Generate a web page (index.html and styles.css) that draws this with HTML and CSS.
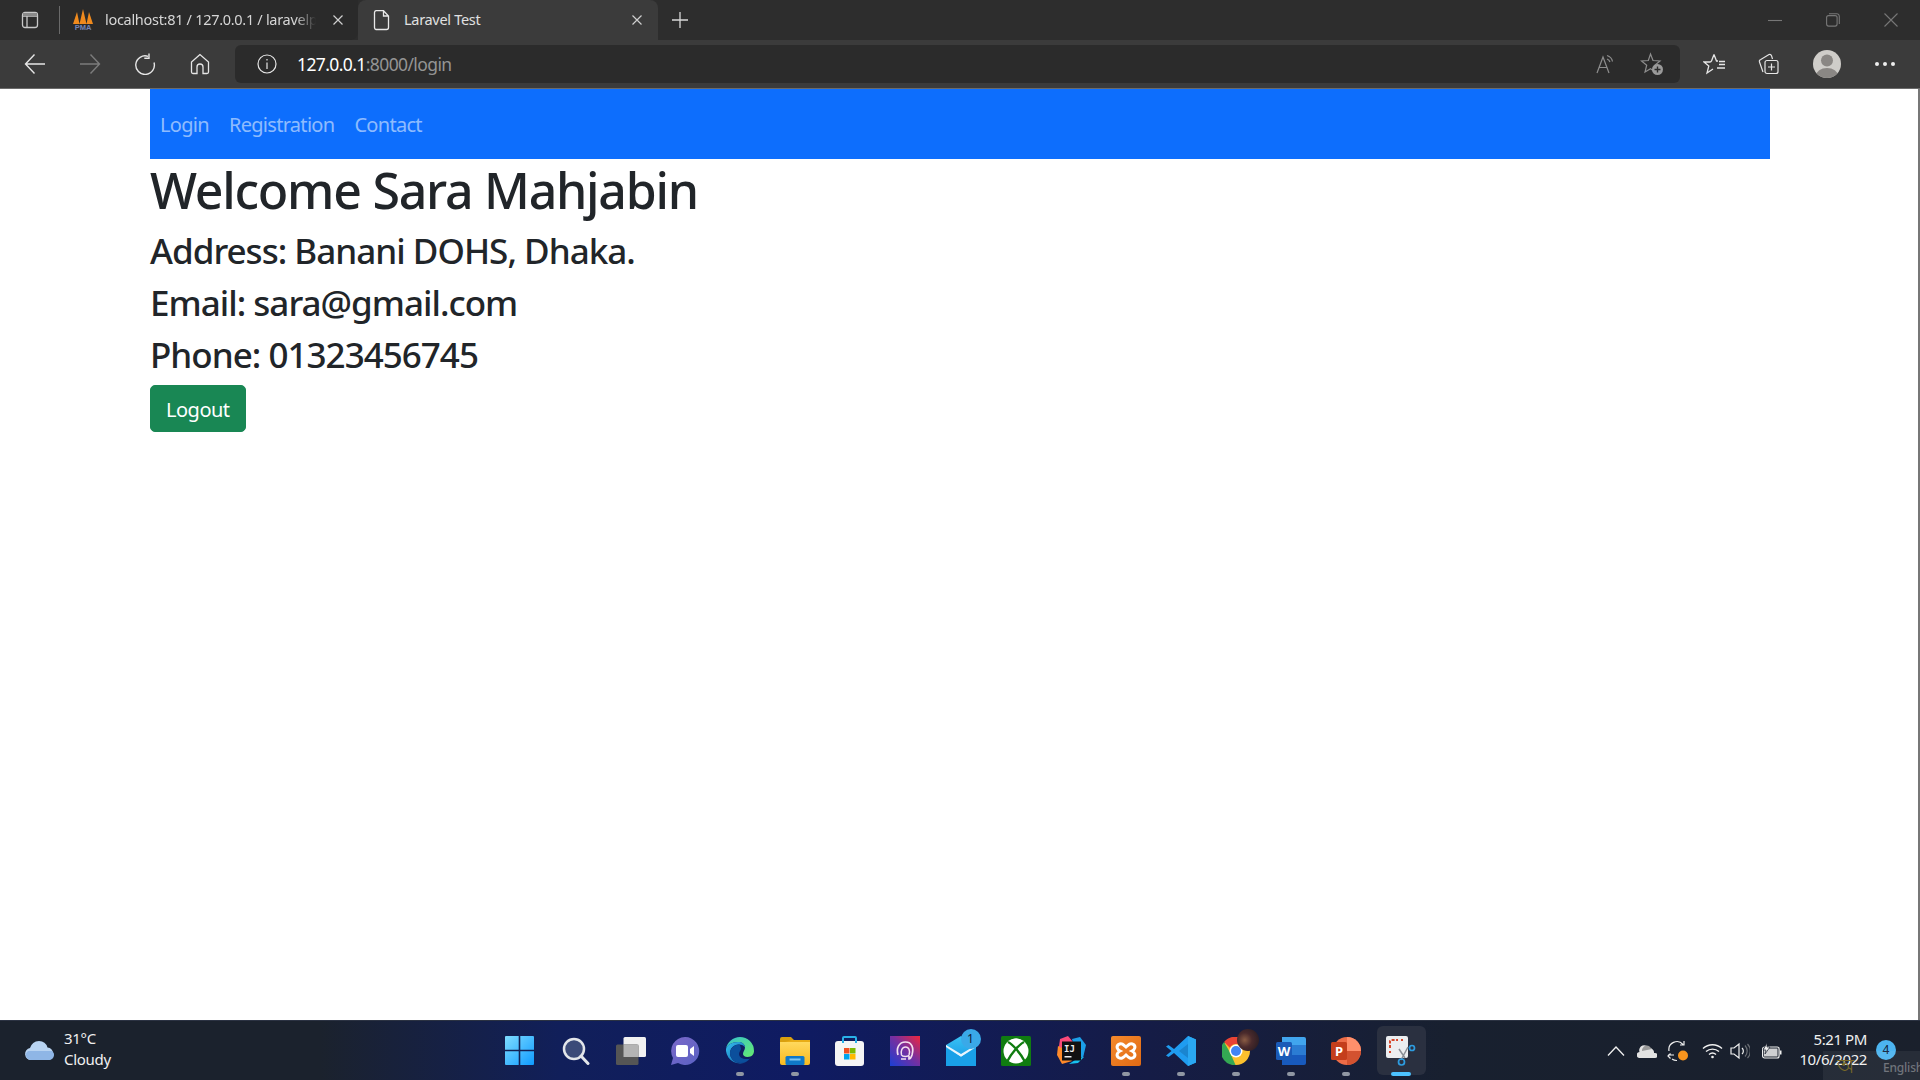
FILE: index.html
```html
<!DOCTYPE html>
<html lang="en">
<head>
  <meta charset="UTF-8" />
  <title>Laravel Test</title>
  <link rel="stylesheet" href="styles.css">
</head>
<body>
  <svg class="defs" width="0" height="0">
    <defs>
      <linearGradient id="gWin" x1="0" y1="0" x2="1" y2="1"><stop offset="0" stop-color="#7fdcff"/><stop offset="1" stop-color="#0f9bff"/></linearGradient>
      <linearGradient id="gChat" x1="0" y1="0" x2="1" y2="1"><stop offset="0" stop-color="#7b68c8"/><stop offset="1" stop-color="#5a62c4"/></linearGradient>
      <linearGradient id="gEdge" x1="0" y1="0" x2="1" y2="1"><stop offset="0" stop-color="#35c1f1"/><stop offset="1" stop-color="#0c59a4"/></linearGradient>
      <linearGradient id="gEdge2" x1="0" y1="0" x2="1" y2="1"><stop offset="0" stop-color="#35c1d0"/><stop offset="1" stop-color="#66eb6e"/></linearGradient>
      <linearGradient id="gFolder" x1="0" y1="0" x2="0" y2="1"><stop offset="0" stop-color="#ffd95e"/><stop offset="1" stop-color="#f9b91f"/></linearGradient>
      <linearGradient id="gAvast" x1="0" y1="1" x2="1" y2="0"><stop offset="0" stop-color="#1a3fd4"/><stop offset=".55" stop-color="#7a2f9e"/><stop offset="1" stop-color="#f0263c"/></linearGradient>
      <linearGradient id="gMail" x1="0" y1="0" x2="0" y2="1"><stop offset="0" stop-color="#3ac3f5"/><stop offset="1" stop-color="#0f8fe0"/></linearGradient>
      <linearGradient id="gXampp" x1="0" y1="0" x2="1" y2="1"><stop offset="0" stop-color="#f58a2c"/><stop offset="1" stop-color="#e06a14"/></linearGradient>
    </defs>
  </svg>

  <div class="tabstrip">
    <div class="sidebar-btn">
      <svg width="20" height="20" viewBox="0 0 20 20" fill="none" stroke="#c8c8c8" stroke-width="1.3"><rect x="2.5" y="2.5" width="15" height="15" rx="2.5"/><path d="M7 6.5V17M3 6h14" /><rect x="3" y="3" width="14" height="3" fill="#8a8a8a" stroke="none"/></svg>
    </div>
    <div class="tab">
      <svg class="favicon" width="22" height="22" viewBox="0 0 22 22">
        <path d="M1 15 5 3l2.500 12zM7.500 15 11 0l3.500 15zM14.500 15 17 3l4 12z" fill="#f08a1d"/>
        <text class="pma" x="11" y="21" text-anchor="middle">PMA</text>
      </svg>
      <span class="tab-title fade">localhost:81 / 127.0.0.1 / laravelp</span>
      <svg class="tab-close" width="12" height="12" viewBox="0 0 12 12" stroke="#cfcfcf" stroke-width="1.2"><path d="M1.500 1.500l9 9M10.500 1.500l-9 9"/></svg>
    </div>
    <div class="tab active">
      <svg class="favicon" width="18" height="22" viewBox="0 0 18 22" fill="none" stroke="#e8e8e8" stroke-width="1.3"><path d="M3 1.700h7.500L15.500 7v11.500a2 2 0 0 1-2 2H3a2 2 0 0 1-1.500-2V3.500A2 2 0 0 1 3 1.700zM10.500 1.700V7h5"/></svg>
      <span class="tab-title">Laravel Test</span>
      <svg class="tab-close" width="12" height="12" viewBox="0 0 12 12" stroke="#cfcfcf" stroke-width="1.2"><path d="M1.500 1.500l9 9M10.500 1.500l-9 9"/></svg>
    </div>
    <svg class="new-tab" width="18" height="18" viewBox="0 0 18 18" stroke="#d8d8d8" stroke-width="1.3"><path d="M9 1v16M1 9h16"/></svg>
    <div class="window-btns">
      <svg width="14" height="14" viewBox="0 0 14 14" stroke="#777" stroke-width="1.1"><path d="M0 7.500h14"/></svg>
      <svg width="14" height="14" viewBox="0 0 14 14" fill="none" stroke="#777" stroke-width="1.1"><rect x=".6" y="2.600" width="10.500" height="10.500" rx="2"/><path d="M3 .7h8a2.500 2.500 0 0 1 2.300 2.300v8"/></svg>
      <svg width="14" height="14" viewBox="0 0 14 14" stroke="#777" stroke-width="1.1"><path d="M.5.500l13 13M13.500.5l-13 13"/></svg>
    </div>
  </div>

  <div class="toolbar">
    <div class="tool">
      <svg width="22" height="22" viewBox="0 0 22 22" fill="none" stroke="#e6e6e6" stroke-width="1.4"><path d="M21 11H1.500M10.500 1.500 1.500 11l9 9.500"/></svg>
    </div>
    <div class="tool">
      <svg width="22" height="22" viewBox="0 0 22 22" fill="none" stroke="#7c7c7c" stroke-width="1.4"><path d="M1 11h19.500M11.500 1.500l9 9.500-9 9.500"/></svg>
    </div>
    <div class="tool">
      <svg width="22" height="22" viewBox="0 0 22 22" fill="none" stroke="#e6e6e6" stroke-width="1.4"><path d="M14 3.300A9.300 9.300 0 1 0 20 9.500M15 .5v4.700h-4.700" /></svg>
    </div>
    <div class="tool">
      <svg width="22" height="22" viewBox="0 0 22 22" fill="none" stroke="#e6e6e6" stroke-width="1.3"><path d="M11 1.500 2.500 9v10a1.500 1.500 0 0 0 1.500 1.500h4V14a3 3 0 0 1 6 0v6.500h4a1.500 1.500 0 0 0 1.500-1.500V9z"/></svg>
    </div>

    <div class="addressbar">
      <svg class="info" width="20" height="20" viewBox="0 0 20 20" fill="none" stroke="#e6e6e6" stroke-width="1.2"><circle cx="10" cy="10" r="9"/><path d="M10 8.500V15M10 5v1.500"/></svg>
      <span class="url"><b>127.0.0.1</b>:8000/login</span>
      <svg class="read" width="20" height="20" viewBox="0 0 20 20" fill="none" stroke="#8e8e8e" stroke-width="1.2"><path d="M1 19 7 3l6 16M3 13.500h8M11 1.500c3 1 5 3 5.500 6M11 5c1.500.5 2.500 1.500 3 3"/></svg>
      <svg class="fav-add" width="24" height="24" viewBox="0 0 24 24"><path d="M10.500 2 13 8.500l7 .5-5.500 4.500L16 20.500l-5.500-3.700L5 20l1.700-6.800L1.500 9l6.800-.5z" fill="none" stroke="#8e8e8e" stroke-width="1.2"/><circle cx="17.500" cy="17.500" r="5.500" fill="#9a9a9a"/><path d="M17.500 14.500v6M14.500 17.500h6" stroke="#2b2b2b" stroke-width="1.400"/></svg>
    </div>

    <div class="tools-right">
      <div class="tool">
        <svg width="24" height="22" viewBox="0 0 24 22" fill="none" stroke="#e6e6e6" stroke-width="1.3"><path d="M11 1.500 13.500 8H15M7.500 9 1 9l4.800 4L4 20l6-4M8.500 8 11 1.500M7.500 9l1-1M16 8.500h6M16 11.500h6M14 15h8"/></svg>
      </div>
      <div class="tool">
        <svg width="22" height="22" viewBox="0 0 22 22" fill="none" stroke="#e6e6e6" stroke-width="1.2"><path d="M6 19 2.500 9a2 2 0 0 1 1.300-2.500L12 1.500a2 2 0 0 1 2.500 1.200L15.500 6"/><rect x="8" y="7.500" width="13" height="13" rx="2" fill="#3b3b3b"/><path d="M14.500 10.500v7M11 14h7"/></svg>
      </div>
      <div class="avatar">
        <svg width="28" height="28" viewBox="0 0 28 28"><defs><clipPath id="avatarClip"><circle cx="14" cy="14" r="14"/></clipPath></defs><circle cx="14" cy="14" r="14" fill="#cfcdc9"/><g clip-path="url(#avatarClip)"><circle cx="14" cy="10.500" r="6" fill="#8a8784"/><ellipse cx="14" cy="26" rx="11" ry="8" fill="#8a8784"/></g></svg>
      </div>
      <div class="tool more"><i></i><i></i><i></i></div>
    </div>
  </div>

  <main class="page">
    <nav class="navbar">
      <a class="nav-link" href="#">Login</a>
      <a class="nav-link" href="#">Registration</a>
      <a class="nav-link" href="#">Contact</a>
    </nav>
    <h1>Welcome Sara Mahjabin</h1>
    <h3>Address: Banani DOHS, Dhaka.</h3>
    <h3>Email: sara@gmail.com</h3>
    <h3>Phone: 01323456745</h3>
    <a class="btn-logout" href="#">Logout</a>
  </main>

  <footer class="taskbar">
    <div class="weather">
      <svg width="32" height="24" viewBox="0 0 32 24"><path d="M7 21a6 6 0 0 1-1-11.900A10 10 0 0 1 15 2a9 9 0 0 1 8.500 6.500A6.500 6.500 0 0 1 25 21z" fill="#b9d4f2"/><path d="M7 21a5 5 0 0 1-3-9h24a5 5 0 0 1-3 9z" fill="#8fb6e6"/></svg>
      <div class="weather-text"><div>31°C</div><div>Cloudy</div></div>
    </div>

    <div class="apps">
      <div class="app"><svg width="29" height="29" viewBox="0 0 29 29" fill="url(#gWin)"><path d="M1 0h12.700v13.700H0V1a1 1 0 0 1 1-1zM15.300 0H28a1 1 0 0 1 1 1v12.700H15.300zM0 15.300h13.700V29H1a1 1 0 0 1-1-1zM15.300 15.300H29V28a1 1 0 0 1-1 1H15.300z"/></svg></div>
      <div class="app search"><svg width="28" height="28" viewBox="0 0 28 28"><circle cx="12" cy="12" r="10" fill="#3b4a78" stroke="#e3e6ea" stroke-width="2.500"/><path d="M19 19l7 7.500" stroke="#e3e6ea" stroke-width="3" stroke-linecap="round"/></svg></div>
      <div class="app search"><svg width="30" height="28" viewBox="0 0 30 28"><rect x="7.500" y="0" width="22.500" height="20" rx="1.500" fill="#f1f1f1"/><rect x="0" y="7.500" width="22.500" height="20.500" rx="1.500" fill="#555"/><rect x="7.500" y="7.500" width="15" height="12.500" fill="#b4b4b4"/></svg></div>
      <div class="app"><svg width="30" height="30" viewBox="0 0 30 30"><path d="M15 1a14 14 0 1 1-7 26L1 29l2-7A14 14 0 0 1 15 1z" fill="url(#gChat)"/><rect x="6" y="9" width="12" height="12" rx="2" fill="#fff"/><path d="M20 13l4-3v10l-4-3z" fill="#fff"/></svg></div>
      <div class="app on"><svg width="30" height="30" viewBox="0 0 30 30"><path d="M15 1a14 14 0 0 1 14 14c0 3-2 6-6.500 6-3 0-4.500-1.500-4.500-3 0-3 2-3.500 2-6.500C20 8 17 6 13 6 7 6 2 9 1 13 2 6 8 1 15 1z" fill="url(#gEdge2)"/><path d="M1 13c1-4 6-7 12-7 4 0 7 2 7 5.500-1-2-3-3-6-3-6 0-9 4.500-9 8.500 0 5 4 10 11 10 2 0 4-.5 6-1.500A14 14 0 0 1 1 15z" fill="url(#gEdge)"/><path d="M14 8.500c-5 0-9 4.500-9 8.500 0 5 4 10 11 10 4 0 7-2 9-4.500-1 .5-2 .5-3 .5-5 0-8-2-8-5 0-2 1.500-3 2-5-.5-2.500-1-4.500-2-4.500z" fill="#0b4f9c"/></svg></div>
      <div class="app on"><svg width="30" height="28" viewBox="0 0 30 28"><path d="M0 2a2 2 0 0 1 2-2h9l3 3h14a2 2 0 0 1 2 2v4H0z" fill="#d9a00f"/><path d="M0 5h30v21a2 2 0 0 1-2 2H2a2 2 0 0 1-2-2z" fill="url(#gFolder)"/><path d="M5 5h25V3H12z" fill="#e9ad16"/><rect x="5.500" y="19" width="19" height="9" rx="1.500" fill="#0f78c8"/><rect x="9.500" y="21.500" width="11" height="2" fill="#7fc6f2"/></svg></div>
      <div class="app"><svg width="30" height="30" viewBox="0 0 30 30"><rect x="0" y="5" width="29" height="25" rx="3" fill="#f5f5f5"/><path d="M8 7V2a1 1 0 0 1 1-1h11a1 1 0 0 1 1 1v5" fill="none" stroke="#29b1e8" stroke-width="2"/><rect x="9" y="12" width="5.500" height="5.500" fill="#f25022"/><rect x="15" y="12" width="5.500" height="5.500" fill="#7fba00"/><rect x="9" y="18" width="5.500" height="5.500" fill="#00a4ef"/><rect x="15" y="18" width="5.500" height="5.500" fill="#ffb900"/></svg></div>
      <div class="app"><svg width="30" height="30" viewBox="0 0 30 30"><rect width="30" height="30" fill="url(#gAvast)"/><path d="M8 19c-2-7 1-13 7.500-13S24 12 22 19c-1 3-2 4-3 4v-3" fill="none" stroke="#f3dfef" stroke-width="1.700"/><path d="M11.500 19c-1-4 .5-8 4-8s5 4 3.500 8c-.5 1-1.500 1.500-3.500 1.500S12 20 11.500 19zM11 23h5" fill="none" stroke="#f3dfef" stroke-width="1.500"/></svg></div>
      <div class="app"><div class="mail"><svg width="30" height="30" viewBox="0 0 30 30"><path d="M0 9 15 0l15 9v21H0z" fill="url(#gMail)"/><path d="M0 9l15 9 15-9v2L15 21 0 11z" fill="#e8f5fd"/><path d="M0 12l15 9 15-9v18H0z" fill="#19a0e8"/></svg><span class="badge">1</span></div></div>
      <div class="app"><svg width="30" height="30" viewBox="0 0 30 30"><rect width="30" height="30" rx="1.500" fill="#107c10"/><circle cx="15" cy="15" r="12.500" fill="#fff"/><path d="M7 6c5 2.500 13 12 16.500 19M23 6C18 8.500 10 18 6.500 25" fill="none" stroke="#107c10" stroke-width="2.400"/><path d="M9 4.500c2 0 4.500 1.500 6 3 1.500-1.500 4-3 6-3-1.500-1-3.500-2-6-2s-4.500 1-6 2z" fill="#fff"/></svg></div>
      <div class="app"><svg width="30" height="30" viewBox="0 0 30 30"><path d="M4 3 12 0l5 6-15 12z" fill="#fc4a7a"/><path d="M16 3l8-2 6 8-3 13-7-4z" fill="#1c9fe8"/><path d="M2 10 1 19l5 9 10-3-8-12z" fill="#ff8a2a"/><path d="M22 22l-9 6 9-1 6-6z" fill="#17c1f0"/><rect x="6" y="5.500" width="19" height="19" fill="#111"/><text class="ij" x="8" y="16">IJ</text><rect x="8.500" y="20" width="7" height="1.500" fill="#eee"/></svg></div>
      <div class="app on"><svg width="30" height="30" viewBox="0 0 30 30"><rect width="30" height="30" rx="2" fill="url(#gXampp)"/><path d="M7.500 8.500c3-2 5 0 7.500 2.500 2.500-2.500 4.500-4.500 7.500-2.500 2.500 2 1.500 5-1.500 6.500 3 1.500 4 4.500 1.500 6.500-3 2-5 0-7.500-2.500-2.500 2.500-4.500 4.500-7.500 2.500-2.500-2-1.500-5 1.500-6.500-3-1.500-4-4.500-1.500-6.500z" fill="none" stroke="#fff" stroke-width="3"/></svg></div>
      <div class="app on"><svg width="30" height="30" viewBox="0 0 30 30"><path d="M22 0 30 3.500v23L22 30 8 17 2.500 21 0 19.500 5.500 15 0 10.500 2.500 9 8 13z" fill="#1f9cf0"/><path d="M22 8v14l-9-7z" fill="#0d3f71" opacity=".25"/><path d="M22 0v30l8-3.500v-23z" fill="#2aa8f2"/></svg></div>
      <div class="app on"><div class="chrome-wrap"><svg width="28" height="28" viewBox="0 0 28 28"><circle cx="14" cy="14" r="14" fill="#fbc02d"/><path d="M14 0a14 14 0 0 1 12 7H14A7 7 0 0 0 7.800 10.800L2 5A14 14 0 0 1 14 0z" fill="#ea4335"/><path d="M2 5l6 10.500 5.500 12.500A14 14 0 0 1 2 5z" fill="#34a853"/><circle cx="14" cy="14" r="6.500" fill="#fff"/><circle cx="14" cy="14" r="5" fill="#4285f4"/></svg><span class="chrome-face"></span></div></div>
      <div class="app on"><svg width="30" height="28" viewBox="0 0 30 28"><path d="M6 0h22a2 2 0 0 1 2 2v6H6z" fill="#41a5ee"/><rect x="6" y="8" width="24" height="10" fill="#2b7cd3"/><path d="M6 18h24v8a2 2 0 0 1-2 2H6z" fill="#185abd"/><rect x="0" y="5" width="16" height="18" rx="1.500" fill="#1a5bb8"/><text class="doc-letter" x="8" y="19" text-anchor="middle">W</text></svg></div>
      <div class="app on"><svg width="30" height="28" viewBox="0 0 30 28"><circle cx="16" cy="14" r="14" fill="#ed6c47"/><path d="M16 0a14 14 0 0 1 14 14H16z" fill="#ff8f6b"/><path d="M16 14h14a14 14 0 0 1-14 14z" fill="#d35230"/><rect x="0" y="5" width="16" height="18" rx="1.500" fill="#c43e1c"/><text class="doc-letter" x="8" y="19" text-anchor="middle">P</text></svg></div>
      <div class="app running"><svg width="30" height="30" viewBox="0 0 30 30"><rect x="0" y="0" width="22" height="22" rx="2" fill="#eceef0"/><path d="M4 12V5a1 1 0 0 1 1-1h7M15 4h2M4 15v2" fill="none" stroke="#d8472b" stroke-width="2" stroke-dasharray="3 1.500"/><path d="M13 13l6 9M22 11l-7 13" stroke="#8b8f96" stroke-width="1.500" fill="none"/><circle cx="26" cy="12" r="2.500" fill="none" stroke="#2d9ce0" stroke-width="1.700"/><circle cx="15.500" cy="26" r="3" fill="none" stroke="#2d9ce0" stroke-width="1.700"/></svg></div>
    </div>

    <div class="tray">
      <svg class="tray-chev" width="18" height="10" viewBox="0 0 18 10" fill="none" stroke="#f0f0f0" stroke-width="1.300"><path d="M1 9.500 9 1l8 8.500"/></svg>
      <svg class="tray-cloud" width="20" height="14" viewBox="0 0 20 14"><path d="M3 14a3 3 0 0 1-.5-6A5 5 0 0 1 12 4.500 4 4 0 0 1 17 9h1a2.500 2.500 0 0 1 0 5z" fill="#e2e2e2"/><path d="M5 7A5 5 0 0 1 12 2l3 3z" fill="#9a9a9a"/></svg>
      <svg class="tray-sync" width="22" height="22" viewBox="0 0 22 22" fill="none" stroke="#efefef" stroke-width="1.200"><path d="M2 11A8 8 0 0 1 16 4.500M17 1v4h-4M1 15h6M3.500 18.500 1 16l2.500-2.500M5 19a8 8 0 0 0 5 1.500"/><circle cx="16" cy="15.500" r="5" fill="#f7941d" stroke="none"/></svg>
      <svg class="tray-wifi" width="21" height="16" viewBox="0 0 21 16" fill="none" stroke="#f0f0f0" stroke-width="1.400"><path d="M1 5.500a14 14 0 0 1 19 0M4 8.500a10 10 0 0 1 13 0M7 11.500a5.500 5.500 0 0 1 7 0"/><circle cx="10.500" cy="14" r="1.300" fill="#f0f0f0" stroke="none"/></svg>
      <svg class="tray-vol" width="20" height="18" viewBox="0 0 20 18" fill="none" stroke="#f0f0f0" stroke-width="1.200"><path d="M1 6v6h3l5 4V2L4 6z"/><path d="M12 6a4 4 0 0 1 0 6"/><path d="M15 3.500a8 8 0 0 1 0 11M17.500 2a10 10 0 0 1 0 14" stroke="#6b6f75"/></svg>
      <svg class="tray-batt" width="20" height="16" viewBox="0 0 20 16"><rect x=".6" y="4" width="16.500" height="11" rx="2" fill="none" stroke="#f0f0f0" stroke-width="1.200"/><rect x="2" y="5.500" width="13.500" height="8" fill="#f0f0f0" opacity=".85"/><rect x="18" y="7.500" width="1.500" height="4" fill="#f0f0f0"/><path d="M5 0 1 7h3l-1 4 5-7H5z" fill="#f0f0f0" stroke="#1a202c" stroke-width=".7"/></svg>
      <div class="clock"><div>5:21 PM</div><div>10/6/2022</div></div>
      <span class="notify">4</span>
    </div>

    <div class="lang-hint"><span class="lang-glyph">অ</span><span class="lang-name">English</span></div>
  </footer>
</body>
</html>
```

FILE: styles.css
```css
* {
  box-sizing: border-box;
}

body {
  margin: 0;
  height: 100vh;
  display: flex;
  flex-direction: column;
  overflow: hidden;
  font-family: "Noto Sans", "Open Sans", sans-serif;
  background: #fff;
}

.defs {
  position: absolute;
}

/* browser chrome */
.tabstrip {
  height: 40px;
  background: #2d2d2d;
  display: flex;
  align-items: center;
  color: #d6d6d6;
  font-size: 15px;
}

.sidebar-btn {
  width: 60px;
  height: 28px;
  display: flex;
  align-items: center;
  padding-left: 20px;
  border-right: 1px solid #6a6a6a;
}

.tab {
  height: 40px;
  width: 298px;
  display: flex;
  align-items: center;
  padding: 0 14px 0 12px;
  background: #2a2a2a;
  border-radius: 0 0 8px 0;
}

.tab.active {
  width: 300px;
  padding: 0 15px 0 14px;
  background: #3b3b3b;
  border-radius: 8px 8px 0 0;
  color: #e0e0e0;
}

.favicon {
  flex: none;
  margin-right: 11px;
}

.pma {
  font-family: "Liberation Sans", sans-serif;
  font-size: 7.500px;
  font-weight: 700;
  fill: #7484b8;
}

.tab.active .favicon {
  margin-left: 1px;
  margin-right: 13px;
}

.tab-title {
  flex: 1;
  white-space: nowrap;
  overflow: hidden;
  padding-bottom: 2px;
  font-size: 14.500px;
  letter-spacing: -0.3px;
}

.tab-title.fade {
  -webkit-mask-image: linear-gradient(90deg, #000 90%, transparent 100%);
  mask-image: linear-gradient(90deg, #000 90%, transparent 100%);
}

.tab-close {
  flex: none;
  margin-left: 16px;
}

.new-tab {
  margin-left: 13px;
}

.window-btns {
  margin-left: auto;
  display: flex;
  gap: 44px;
  padding-right: 22px;
}

.toolbar {
  height: 49px;
  background: #3b3b3b;
  border-bottom: 1px solid #6b6b6b;
  display: flex;
  align-items: center;
  padding: 0 8px 0 7px;
}

.tool {
  width: 55px;
  height: 40px;
  display: flex;
  align-items: center;
  justify-content: center;
}

.addressbar {
  flex: 1;
  height: 38px;
  margin-left: 8px;
  background: #2b2b2b;
  border-radius: 6px;
  display: flex;
  align-items: center;
  padding: 0 16px 0 22px;
}

.url {
  margin-left: 20px;
  flex: 1;
  font-size: 17.500px;
  letter-spacing: -0.6px;
  color: #949494;
}

.url b {
  font-weight: 400;
  color: #fff;
}

.read {
  margin-right: 24px;
}

.tools-right {
  display: flex;
  align-items: center;
  margin-left: 7px;
}

.tools-right .tool + .tool {
  margin-left: -2px;
}

.avatar {
  width: 64px;
  display: flex;
  justify-content: center;
}

.more {
  gap: 4px;
  margin-left: -2px;
}

.more i {
  width: 4px;
  height: 4px;
  border-radius: 50%;
  background: #eee;
}

/* page content */
.page {
  flex: 1;
  padding: 0 148px 0 150px;
  border-right: 2px solid #777;
  color: #212529;
}

.navbar {
  height: 70px;
  background: #0d6efd;
  display: flex;
  align-items: center;
}

.nav-link {
  padding: 11px 10px 9px;
  font-size: 20px;
  line-height: 30px;
  letter-spacing: -0.7px;
  color: rgba(255, 255, 255, 0.55);
  text-decoration: none;
}

h1 {
  margin: 0 0 8px;
  font-size: 50px;
  line-height: 62px;
  font-weight: 500;
  letter-spacing: -1.25px;
}

h3 {
  margin: 0 0 8px;
  font-size: 35px;
  line-height: 44px;
  font-weight: 500;
  letter-spacing: -0.98px;
}

.btn-logout {
  display: inline-block;
  padding: 8.500px 15px 6.500px;
  border: 1px solid #198754;
  border-radius: 5px;
  background: #198754;
  color: #fff;
  font-size: 20px;
  line-height: 30px;
  letter-spacing: -0.5px;
  text-decoration: none;
}

/* windows taskbar */
.taskbar {
  position: relative;
  height: 60px;
  border-top: 1px solid #2b3242;
  display: grid;
  grid-template-columns: 1fr auto 1fr;
  align-items: center;
  color: #f0f0f0;
  background: linear-gradient(90deg, #1b222d 0, #1b222d 320px, #111f5a 560px, #0f1b62 800px, #151c46 1150px, #18202f 1450px, #1a202c 100%);
}

.weather {
  display: flex;
  align-items: center;
  gap: 8px;
  padding-left: 24px;
  font-size: 15px;
  line-height: 21px;
  letter-spacing: -0.3px;
}

.weather-text {
  padding-bottom: 4px;
}

.apps {
  display: flex;
  margin-left: 1px;
}

.app {
  position: relative;
  width: 55.100px;
  height: 49px;
  display: flex;
  align-items: center;
  justify-content: center;
}

.app.search svg {
  margin-left: 2px;
}

.app.on::after,
.app.running::after {
  content: "";
  position: absolute;
  left: 50%;
  bottom: -1px;
  width: 8px;
  height: 4px;
  margin-left: -4px;
  border-radius: 2px;
  background: #9097a3;
}

.app.running {
  background: #2a3040;
  border-radius: 6px;
  width: 49px;
  margin: 0 3px;
}

.app.running::after {
  width: 20px;
  margin-left: -10px;
  background: #4cc2ff;
}

.mail,
.chrome-wrap {
  position: relative;
  display: flex;
}

.badge {
  position: absolute;
  top: -7px;
  right: -5px;
  width: 20px;
  height: 20px;
  border-radius: 50%;
  background: #3aa9e8;
  color: #10203a;
  font-size: 12px;
  line-height: 20px;
  text-align: center;
}

.chrome-face {
  position: absolute;
  top: -8px;
  right: -9px;
  width: 22px;
  height: 22px;
  border-radius: 50%;
  background: radial-gradient(circle at 35% 50%, #8a5c44 0, #4a2a2c 40%, #1f1820 100%);
}

.ij {
  font-family: "DejaVu Sans Mono", monospace;
  font-size: 9px;
  font-weight: 700;
  fill: #eee;
}

.doc-letter {
  font-family: "Noto Sans", sans-serif;
  font-size: 13px;
  font-weight: 700;
  fill: #fff;
}

.tray {
  display: flex;
  align-items: center;
  justify-content: flex-end;
  padding-right: 24px;
}

.tray-chev {
  margin-right: 12px;
}

.tray-cloud {
  margin-right: 10px;
}

.tray-sync {
  margin-right: 13px;
}

.tray-wifi {
  margin-right: 7px;
}

.tray-vol {
  margin-right: 12px;
}

.tray-batt {
  margin-right: 15px;
}

.clock {
  width: 70px;
  padding-bottom: 3px;
  white-space: nowrap;
  text-align: right;
  font-size: 15px;
  line-height: 20px;
  letter-spacing: -0.4px;
}

.notify {
  width: 20px;
  height: 20px;
  margin-left: 9px;
  margin-top: -2px;
  border-radius: 50%;
  background: #4cb4f0;
  color: #10203a;
  font-size: 12px;
  line-height: 20px;
  text-align: center;
}

.lang-hint {
  position: absolute;
  right: 0;
  bottom: 0;
  width: 97px;
  height: 29px;
  background: rgba(255, 255, 255, 0.06);
  color: rgba(255, 255, 255, 0.35);
  font-size: 12px;
  font-weight: 500;
  letter-spacing: -0.2px;
  white-space: nowrap;
  overflow: hidden;
  display: flex;
  align-items: center;
  padding: 3px 0 0 14px;
}

.lang-glyph {
  flex: none;
  width: 46px;
  color: #7a6a28;
  font-size: 20px;
}
```
